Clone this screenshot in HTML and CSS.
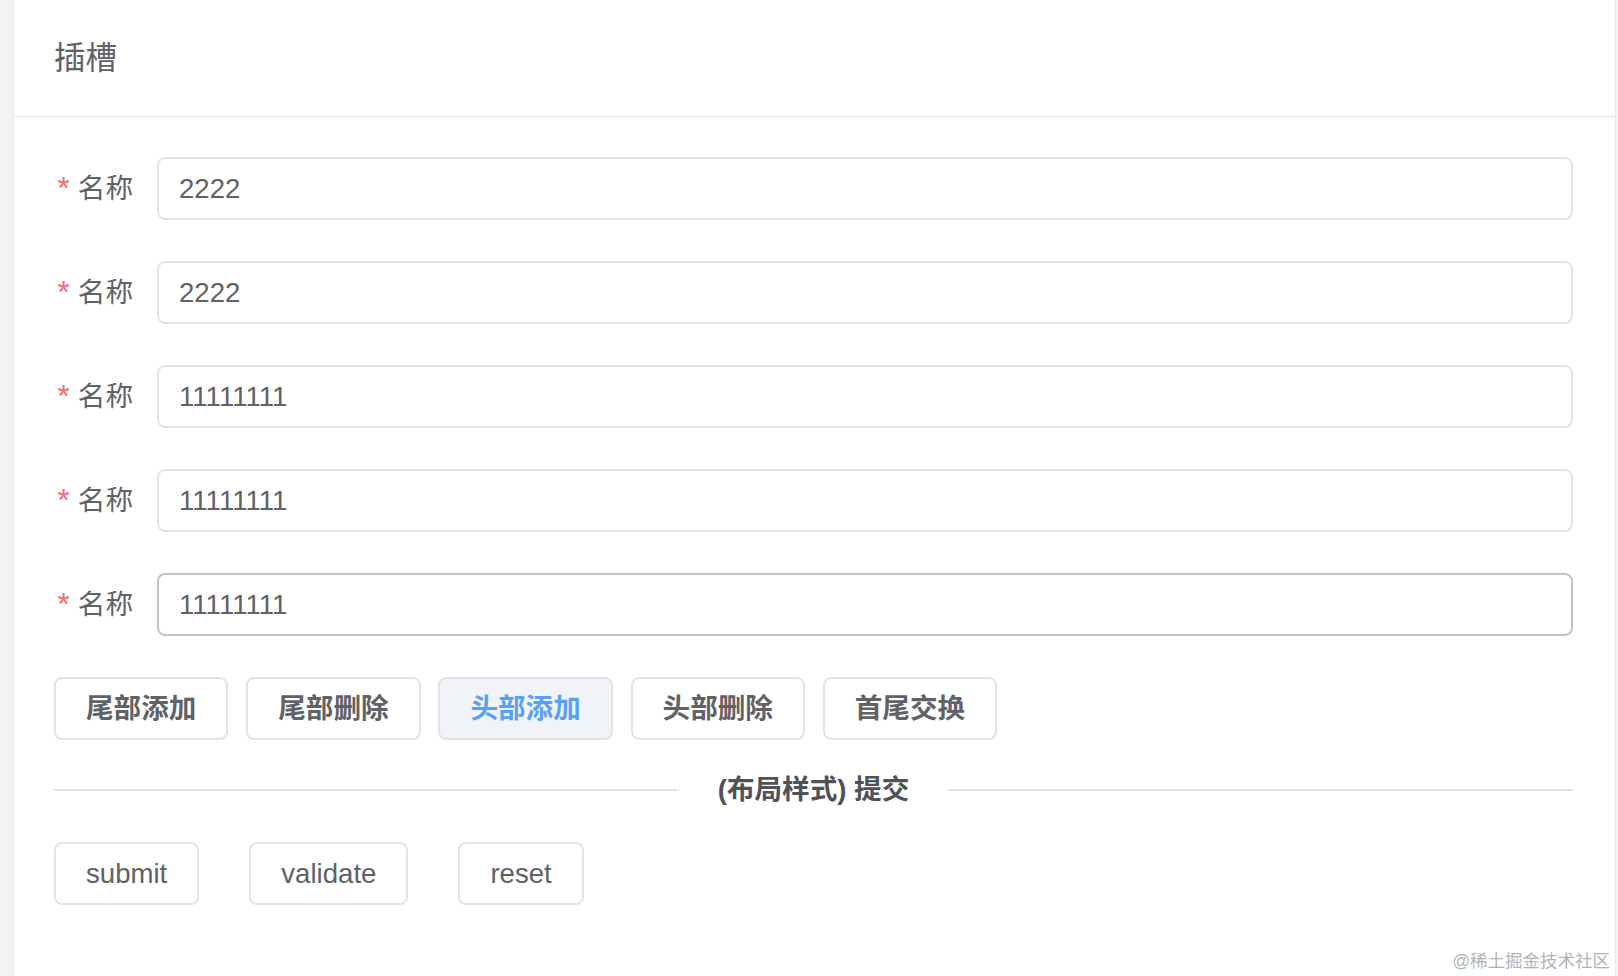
FILE: index.html
```html
<!DOCTYPE html>
<html lang="zh-CN">
<head>
<meta charset="utf-8">
<title>插槽</title>
<link rel="stylesheet" href="styles.css">
</head>
<body>
<div class="page">
  <div class="card">
    <div class="card-header">插槽</div>
    <div class="card-body">
      <form class="form">
        <div class="form-item">
          <label class="label"><span class="req">*</span>名称</label>
          <input class="input" type="text" value="2222">
        </div>
        <div class="form-item">
          <label class="label"><span class="req">*</span>名称</label>
          <input class="input" type="text" value="2222">
        </div>
        <div class="form-item">
          <label class="label"><span class="req">*</span>名称</label>
          <input class="input" type="text" value="11111111">
        </div>
        <div class="form-item">
          <label class="label"><span class="req">*</span>名称</label>
          <input class="input" type="text" value="11111111">
        </div>
        <div class="form-item">
          <label class="label"><span class="req">*</span>名称</label>
          <input class="input input-hover" type="text" value="11111111">
        </div>
        <div class="btn-row">
          <button type="button" class="btn btn-cjk">尾部添加</button>
          <button type="button" class="btn btn-cjk">尾部删除</button>
          <button type="button" class="btn btn-cjk btn-active">头部添加</button>
          <button type="button" class="btn btn-cjk">头部删除</button>
          <button type="button" class="btn btn-cjk">首尾交换</button>
        </div>
        <div class="divider">
          <span class="divider-line"></span>
          <span class="divider-text">(布局样式) 提交</span>
          <span class="divider-line"></span>
        </div>
        <div class="submit-row">
          <button type="button" class="btn">submit</button>
          <button type="button" class="btn">validate</button>
          <button type="button" class="btn">reset</button>
        </div>
      </form>
    </div>
  </div>
  <div class="watermark">@稀土掘金技术社区</div>
</div>
</body>
</html>
```

FILE: styles.css
```css
* {
  box-sizing: border-box;
}

html, body {
  margin: 0;
  padding: 0;
  height: 100%;
  overflow: hidden;
}

body {
  background: #f2f3f5;
  font-family: "Liberation Sans", "Noto Sans CJK SC", sans-serif;
  color: #606266;
}

.page {
  position: relative;
  height: 976px;
  padding-left: 13px;
}

.card {
  width: 1603px;
  height: 990px;
  margin-top: -6px;
  background: #ffffff;
  border: 1px solid #e4e7ed;
  border-radius: 8px;
}

.card-header {
  height: 122px;
  padding: 5px 40px 0;
  display: flex;
  align-items: center;
  border-bottom: 1px solid #e4e7ed;
  font-size: 31.5px;
  line-height: 44px;
  color: #606266;
}

.card-body {
  padding: 40px 42px 0 40px;
}

.form {
  display: flex;
  flex-direction: column;
}

.form-item {
  display: flex;
  align-items: center;
  height: 63px;
  margin-bottom: 41px;
}

.label {
  flex: 0 0 103px;
  display: flex;
  justify-content: flex-end;
  align-items: center;
  padding-right: 24px;
  font-size: 27.6px;
  line-height: 40px;
  color: #606266;
}

.req {
  color: #f56c6c;
  font-size: 32px;
  margin-right: 8px;
  position: relative;
  top: -1px;
}

.input {
  flex: 1;
  min-width: 0;
  height: 63px;
  padding: 0 20px;
  border: 2px solid #e0e3e9;
  border-radius: 8px;
  font-family: inherit;
  font-size: 27.6px;
  color: #606266;
  background: #ffffff;
  outline: none;
}

.input-hover {
  border-color: #c0c4cc;
}

.btn-row {
  display: flex;
  gap: 17.8px;
}

.btn {
  height: 63px;
  padding: 0 30px;
  border: 2px solid #e0e3e9;
  border-radius: 8px;
  background: #ffffff;
  font-family: inherit;
  font-size: 27.6px;
  font-weight: 500;
  line-height: 40px;
  color: #606266;
  cursor: pointer;
}

.btn-cjk {
  font-weight: 600;
}

.btn-active {
  background: #f0f3f7;
  color: #5aa0f5;
}

.divider {
  display: flex;
  align-items: center;
  height: 40px;
  margin-top: 30px;
}

.divider-line {
  flex: 1;
  height: 2px;
  background: #e0e3e9;
}

.divider-text {
  padding: 0 39px;
  font-size: 27.6px;
  font-weight: 600;
  line-height: 40px;
  color: #505257;
  white-space: pre;
}

.submit-row {
  display: flex;
  gap: 50px;
  margin-top: 32px;
}

.watermark {
  position: absolute;
  right: 8px;
  bottom: -2px;
  font-size: 17.5px;
  line-height: 22px;
  color: #b0b3b9;
}
```
